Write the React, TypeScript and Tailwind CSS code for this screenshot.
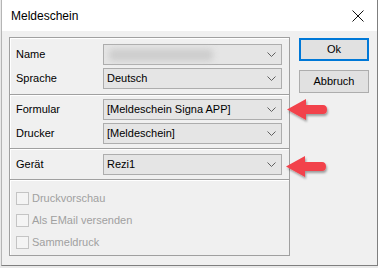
import React from 'react';

const font = { fontFamily: '"Liberation Sans", Arial, sans-serif' };

const Chevron = () => (
  <svg width="9" height="5" viewBox="0 0 9 5" className="shrink-0">
    <path d="M0.5 0.5 L4.5 4.5 L8.5 0.5" fill="none" stroke="#606060" strokeWidth="1" />
  </svg>
);

const Combo: React.FC<{ value: string; blurred?: boolean }> = ({ value, blurred }) => (
  <div className="flex h-[21px] w-[179px] items-center justify-between border border-[#adadad] bg-[#e5e5e5] pl-[3px] pr-[5px]">
    {blurred ? (
      <span className="ml-[2px] h-[12px] w-[104px] rounded-sm bg-[#cdcdcd] blur-[3px]" />
    ) : (
      <span className="text-[11px] text-black">{value}</span>
    )}
    <Chevron />
  </div>
);

const Row: React.FC<{ label: string; value: string; blurred?: boolean }> = ({ label, value, blurred }) => (
  <div className="flex items-center">
    <span className="w-[87px] text-[11px] text-black">{label}</span>
    <Combo value={value} blurred={blurred} />
  </div>
);

const Separator = () => (
  <div className="border-t border-b border-t-[#a0a0a0] border-b-white" />
);

const CheckRow: React.FC<{ label: string }> = ({ label }) => (
  <div className="flex h-[22px] items-center">
    <span className="h-[13px] w-[13px] border border-[#c4c4c4] bg-[#f4f4f4]" />
    <span className="ml-[3px] text-[11px] text-[#a0a0a0]">{label}</span>
  </div>
);

const Arrow: React.FC<{ className: string }> = ({ className }) => (
  <svg width="44" height="26" viewBox="0 0 44 26" className={`absolute ${className}`}>
    <defs>
      <filter id="sh" x="-20%" y="-20%" width="140%" height="160%">
        <feDropShadow dx="1" dy="2" stdDeviation="1.2" floodColor="#000" floodOpacity="0.35" />
      </filter>
    </defs>
    <path
      d="M1 11.5 L20 1 L20 7 L37 7 Q41 7 41 11.5 Q41 16 37 16 L20 16 L20 22 Z"
      fill="#f2434c"
      filter="url(#sh)"
    />
  </svg>
);

export default function App() {
  return (
    <div className="relative h-[268px] w-[378px] bg-[#e9e9e9]" style={font}>
      <div className="ml-px flex h-[266px] w-[377px] flex-col border-r border-b border-l border-[#7f7f7f] border-l-[#b5b5b5]">
        <div className="flex h-[31px] items-center justify-between bg-white pl-[9px] pr-[13px]">
          <span className="text-[12px] text-black">Meldeschein</span>
          <svg width="12" height="12" viewBox="0 0 12 12">
            <path d="M0.5 0.5 L11.5 11.5 M11.5 0.5 L0.5 11.5" stroke="#111" strokeWidth="1" />
          </svg>
        </div>
        <div className="flex flex-1 bg-[#f0f0f0] pl-[7px] pt-[6px]">
          <div className="flex h-[219px] w-[281px] flex-col border border-[#a0a0a0] shadow-[inset_1px_1px_0_#fff]">
            <div className="flex flex-col gap-[3px] pl-[6px] pt-[6px] pb-[5px]">
              <Row label="Name" value="" blurred />
              <Row label="Sprache" value="Deutsch" />
            </div>
            <Separator />
            <div className="flex flex-col gap-[3px] pl-[6px] pt-[3px] pb-[4px]">
              <Row label="Formular" value="[Meldeschein Signa APP]" />
              <Row label="Drucker" value="[Meldeschein]" />
            </div>
            <Separator />
            <div className="flex flex-col pl-[6px] pt-[4px] pb-[4px]">
              <Row label="Gerät" value="Rezi1" />
            </div>
            <Separator />
            <div className="flex flex-col pl-[6px] pt-[6px]">
              <CheckRow label="Druckvorschau" />
              <CheckRow label="Als EMail versenden" />
              <CheckRow label="Sammeldruck" />
            </div>
          </div>
          <div className="ml-[9px] flex flex-col gap-[9px] pt-px">
            <button className="h-[23px] w-[70px] border border-[#0078d7] bg-[#e1e1e1] text-[11px] text-black shadow-[inset_0_0_0_1px_#0078d7]">
              Ok
            </button>
            <button className="h-[23px] w-[70px] border border-[#adadad] bg-[#e1e1e1] text-[11px] text-black">
              Abbruch
            </button>
          </div>
        </div>
      </div>
      <Arrow className="left-[286px] top-[98px]" />
      <Arrow className="left-[285px] top-[155px]" />
    </div>
  );
}
